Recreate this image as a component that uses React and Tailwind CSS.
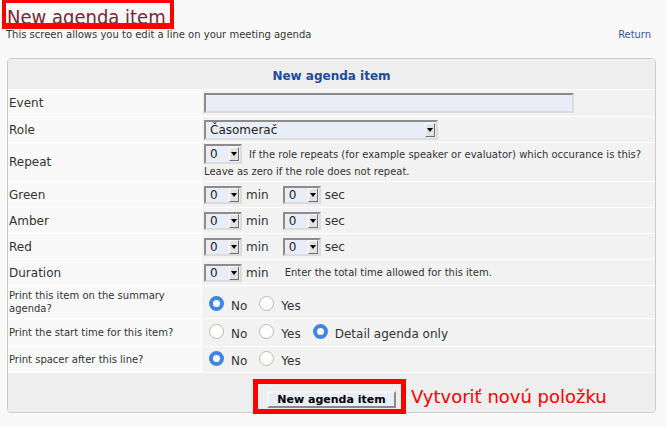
import React from 'react';

const Arrow = () => (
  <span className="flex h-[14px] w-[10px] shrink-0 items-center justify-center border border-t-white border-l-white border-b-[#6f6f6f] border-r-[#6f6f6f] bg-[#e2e2e2]">
    <svg width="6" height="4" viewBox="0 0 6 4">
      <path d="M0 0h6L3 4z" fill="#000" />
    </svg>
  </span>
);

const Select = ({ value = '0', size = 'w-[38px] h-[18px]' }) => (
  <div
    className={`flex ${size} shrink-0 items-center justify-between border-2 border-t-[#8c8c8c] border-l-[#8c8c8c] border-b-[#dcdcdc] border-r-[#dcdcdc] bg-[#e8edf7] pl-[4px] pr-px text-[12px] leading-[14px] text-[#222]`}
  >
    <span>{value}</span>
    <Arrow />
  </div>
);

const Radio = ({ checked, label }) => (
  <label className="flex items-end gap-[7px]">
    <span
      className={
        checked
          ? 'mb-[2px] h-[15px] w-[15px] rounded-full border-[4px] border-[#3d86e6] bg-white'
          : 'mb-[2px] h-[15px] w-[15px] rounded-full border border-[#bdb8b0] bg-white'
      }
    />
    <span className="text-[12px] leading-[14px] text-[#333]">{label}</span>
  </label>
);

const Row = ({ label, height, small, valueClass = '', children }) => (
  <div className={`grid grid-cols-[193px_1fr] gap-x-px ${height}`}>
    <div
      className={`flex items-center bg-[#f9f9f9] pl-px pr-[4px] ${
        small ? 'text-[10px] leading-[13px]' : 'text-[12px] leading-[14px]'
      }`}
    >
      {label}
    </div>
    <div className={`flex items-center bg-[#f2f2f2] ${valueClass}`}>{children}</div>
  </div>
);

const TimeRow = ({ label }) => (
  <Row label={label} height="h-[25px]" valueClass="pl-[2px]">
    <Select />
    <span className="ml-[4px] text-[12px] leading-[14px]">min</span>
    <span className="ml-[14px]">
      <Select />
    </span>
    <span className="ml-[4px] text-[12px] leading-[14px]">sec</span>
  </Row>
);

export default function App() {
  return (
    <div className="relative h-[427px] w-full overflow-hidden bg-[#f9f9f9] font-['DejaVu_Sans',sans-serif] text-[#333]">
      <h1 className="h-[29px] pl-[7px] pt-[5px] font-['DejaVu_Sans_Condensed','DejaVu_Sans',sans-serif] text-[20px] font-normal leading-[24px] text-[#7b2638] [font-stretch:condensed]">
        New agenda item
      </h1>
      <div className="flex h-[12px] items-start justify-between pl-[6px] pr-[15px] text-[10px] leading-[12px]">
        <span>This screen allows you to edit a line on your meeting agenda</span>
        <a className="font-['DejaVu_Sans_Condensed','DejaVu_Sans',sans-serif] text-[11px] leading-[12px] text-[#2f56a6] [font-stretch:condensed]">
          Return
        </a>
      </div>

      <div className="ml-[7px] mt-[17px] w-[649px] overflow-hidden rounded-[4px] border border-[#cccccc] bg-white">
        <div className="flex flex-col gap-px">
          <div className="flex h-[30px] items-center justify-center bg-[#eeeeee] pt-[3px] text-[12px] font-bold leading-[14px] text-[#1c4aa0]">
            New agenda item
          </div>

          <Row label="Event" height="h-[26px]" valueClass="pl-[2px]">
            <div className="h-[20px] w-[370px] border-2 border-t-[#8c8c8c] border-l-[#8c8c8c] border-b-[#dcdcdc] border-r-[#dcdcdc] bg-[#e8edf7]" />
          </Row>

          <Row label="Role" height="h-[25px]" valueClass="pl-[2px]">
            <Select value="Časomerač" size="w-[234px] h-[20px]" />
          </Row>

          <Row label="Repeat" height="h-[38px]" valueClass="pl-[2px] !items-start">
            <div className="flex flex-col text-[10px]">
              <div className="flex h-[21px] items-center">
                <Select size="w-[38px] h-[20px]" />
                <span className="ml-[7px] pt-[2px] leading-[13px]">
                  If the role repeats (for example speaker or evaluator) which occurance is this?
                </span>
              </div>
              <div className="mt-px leading-[13px]">Leave as zero if the role does not repeat.</div>
            </div>
          </Row>

          <TimeRow label="Green" />
          <TimeRow label="Amber" />
          <TimeRow label="Red" />

          <Row label="Duration" height="h-[25px]" valueClass="pl-[2px]">
            <Select />
            <span className="ml-[4px] text-[12px] leading-[14px]">min</span>
            <span className="ml-[16px] text-[10px] leading-[13px]">
              Enter the total time allowed for this item.
            </span>
          </Row>

          <Row
            label="Print this item on the summary agenda?"
            small
            height="h-[32px]"
            valueClass="gap-[12px] pl-[7px] pt-[4px]"
          >
            <Radio checked label="No" />
            <Radio label="Yes" />
          </Row>

          <Row
            label="Print the start time for this item?"
            small
            height="h-[27px]"
            valueClass="gap-[12px] pl-[7px]"
          >
            <Radio label="No" />
            <Radio label="Yes" />
            <Radio checked label="Detail agenda only" />
          </Row>

          <Row label="Print spacer after this line?" small height="h-[25px]" valueClass="gap-[12px] pl-[7px]">
            <Radio checked label="No" />
            <Radio label="Yes" />
          </Row>

          <div className="flex h-[39px] justify-center bg-[#eeeeee] pt-[18px]">
            <button className="h-[17px] w-[129px] border-2 border-t-[#f6f6f6] border-l-[#f6f6f6] border-b-[#8a8a8a] border-r-[#8a8a8a] bg-[#e9edf5] text-[11px] font-bold leading-[13px] text-black">
              New agenda item
            </button>
          </div>
        </div>
      </div>

      <div className="pointer-events-none absolute left-[2px] top-0 h-[29px] w-[172px] border-x-[4px] border-b-[6px] border-t-[3px] border-[#ff0000]" />
      <div className="pointer-events-none absolute left-[253px] top-[379px] h-[35px] w-[153px] border-[5px] border-[#ff0000]" />
      <div className="absolute left-[411px] top-[387px] text-[18px] leading-[20px] text-[#ff0000]">
        Vytvoriť novú položku
      </div>
    </div>
  );
}
